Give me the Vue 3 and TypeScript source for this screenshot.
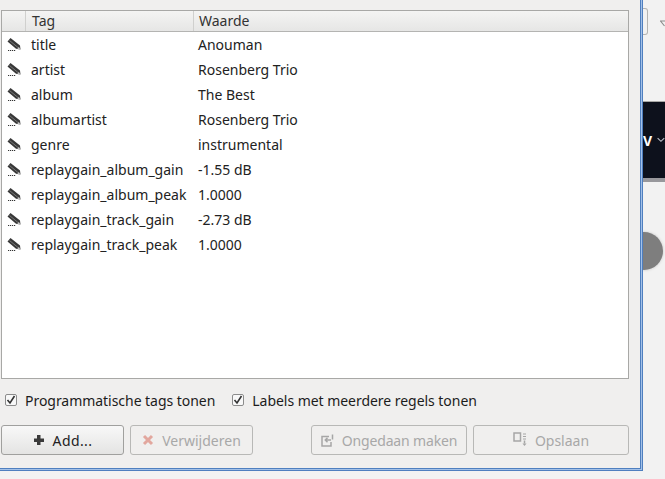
<script setup lang="ts">
interface TagRow {
  tag: string;
  value: string;
}

const rows: TagRow[] = [
  { tag: "title", value: "Anouman" },
  { tag: "artist", value: "Rosenberg Trio" },
  { tag: "album", value: "The Best" },
  { tag: "albumartist", value: "Rosenberg Trio" },
  { tag: "genre", value: "instrumental" },
  { tag: "replaygain_album_gain", value: "-1.55 dB" },
  { tag: "replaygain_album_peak", value: "1.0000" },
  { tag: "replaygain_track_gain", value: "-2.73 dB" },
  { tag: "replaygain_track_peak", value: "1.0000" },
];
</script>

<template>
  <div class="desktop">
    <div class="dialog">
      <div class="table">
        <div class="thead">
          <div class="th th-icon"></div>
          <div class="th th-tag">Tag</div>
          <div class="th th-value">Waarde</div>
        </div>
        <div class="tbody">
          <div v-for="row in rows" :key="row.tag" class="row">
            <svg class="pencil" width="14" height="14" viewBox="0 0 14 14">
              <path d="M0.500 3.500 L3.500 0 L13 7.500 L13.500 11.500 L9 10.800 Z" fill="#383838" />
              <path d="M2.500 2.500 L11 9.500" stroke="#787878" stroke-width="1" />
              <path d="M11.800 8.800 L13.500 11.500 L10.300 11 Z" fill="#c4c4c4" />
              <path d="M1 12.500h1.200M3 12.500h1.200M5 12.500h1.200M7 12.500h1.200" stroke="#333" stroke-width="1" />
            </svg>
            <span class="cell-tag">{{ row.tag }}</span>
            <span class="cell-value">{{ row.value }}</span>
          </div>
        </div>
      </div>

      <div class="options">
        <label class="check">
          <span class="box">
            <svg width="10" height="10" viewBox="0 0 10 10"><path d="M1.500 5 L4 8 L8.500 1" fill="none" stroke="#333" stroke-width="1.600" /></svg>
          </span>
          Programmatische tags tonen
        </label>
        <label class="check">
          <span class="box">
            <svg width="10" height="10" viewBox="0 0 10 10"><path d="M1.500 5 L4 8 L8.500 1" fill="none" stroke="#333" stroke-width="1.600" /></svg>
          </span>
          Labels met meerdere regels tonen
        </label>
      </div>

      <div class="buttons">
        <button class="btn btn-add">
          <svg width="12" height="12" viewBox="0 0 12 12"><path d="M4 1h3.500v3.500H11V8H7.500v3H4V8H1V4.500h3Z" fill="#3a3a3a" /></svg>
          Add...
        </button>
        <button class="btn btn-remove" disabled>
          <svg width="12" height="12" viewBox="0 0 12 12"><path d="M2 2 L10 10 M10 2 L2 10" stroke="#e2a79e" stroke-width="3" /></svg>
          Verwijderen
        </button>
        <span class="spacer"></span>
        <button class="btn btn-undo" disabled>
          <svg width="13" height="13" viewBox="0 0 13 13" fill="none" stroke="#a6a6a6" stroke-width="1.500"><path d="M8 2.500H1v9.500h9V8" /><path d="M10 6H5M6.500 3.800 4.300 6l2.200 2.200" /><path d="M11.500 0.500v5" /></svg>
          Ongedaan maken
        </button>
        <button class="btn btn-save" disabled>
          <svg width="14" height="16" viewBox="0 0 14 16" fill="none" stroke="#a6a6a6"><rect x="1" y="1" width="6.500" height="8" stroke-width="1.500" /><path d="M10 2h3M10 4.500h3M10 7h3" stroke-width="1" /><path d="M11.500 8.500v3" stroke-width="1.500" /><path d="M9.500 11.500h4L11.500 14Z" fill="#a6a6a6" stroke="none" /></svg>
          Opslaan
        </button>
      </div>
    </div>

    <div class="backdrop-btn"></div>
    <svg class="backdrop-arrow" width="5" height="8" viewBox="0 0 5 8"><path d="M0 1H5M0.500 1 L4.500 6" fill="none" stroke="#8c8c8c" stroke-width="1.200" /></svg>
    <div class="backdrop-band">
      <span class="band-letter">V</span>
      <svg width="9" height="6" viewBox="0 0 9 6"><path d="M0.700 0.800 L4.500 4.500 L8.300 0.800" fill="none" stroke="#b8bcc4" stroke-width="1.300" /></svg>
    </div>
    <div class="backdrop-circle"></div>
  </div>
</template>

<style scoped>
.desktop {
  position: relative;
  width: 665px;
  height: 479px;
  overflow: hidden;
  background: #f2f2f2;
  font-family: "Noto Sans", sans-serif;
  font-size: 14px;
  color: #222;
}

.dialog {
  position: absolute;
  left: -3px;
  top: -3px;
  z-index: 1;
  width: 644px;
  height: 472px;
  box-sizing: border-box;
  background: #f0efee;
  border: 1px solid #4f7fbf;
  box-shadow: 0 0 0 1px #a3c1e8, 0 0 0 2px #4f7fbf;
  padding: 12px 11px 0 3px;
  display: flex;
  flex-direction: column;
}

.table {
  height: 369px;
  flex: none;
  box-sizing: border-box;
  border: 1px solid #a8a8a6;
  background: #fff;
  display: flex;
  flex-direction: column;
}

.thead {
  display: flex;
  height: 20px;
  flex: none;
  background: linear-gradient(#f4f4f3, #e6e6e5);
  border-bottom: 1px solid #b4b4b2;
}

.th {
  box-sizing: border-box;
  border-right: 1px solid #d0d0ce;
  padding-left: 6px;
  line-height: 20px;
  color: #333;
}

.th-icon { width: 24px; }
.th-tag { width: 168px; }
.th-value { flex: 1; border-right: none; padding-left: 5px; }

.row {
  display: flex;
  align-items: center;
  height: 25px;
}

.pencil {
  margin-left: 5px;
  flex: none;
}

.cell-tag {
  margin-left: 10px;
  width: 167px;
  flex: none;
}

.options {
  display: flex;
  gap: 17px;
  margin-top: 11px;
  height: 20px;
  align-items: center;
  padding-left: 4px;
  letter-spacing: -0.04px;
}

.check {
  display: flex;
  align-items: center;
  gap: 8px;
  color: #1c1c1c;
}

.box {
  width: 10px;
  height: 10px;
  border: 1px solid #8c8c8c;
  border-radius: 2px;
  background: #f8f8f8;
  display: flex;
}

.buttons {
  display: flex;
  margin-top: 15px;
  gap: 6px;
}

.spacer {
  flex: 1;
}

.btn {
  height: 30px;
  box-sizing: border-box;
  border: 1px solid #a0a09e;
  border-radius: 3px;
  background: linear-gradient(#f8f8f8, #e4e4e3);
  font: inherit;
  color: #222;
  padding: 0;
  display: flex;
  align-items: center;
  justify-content: center;
  gap: 8px;
}

.btn:disabled {
  background: #f0efee;
  border-color: #b8b8b6;
  color: #a8a8a8;
}

.btn-add { width: 123px; letter-spacing: 0.4px; }
.btn-remove { width: 123px; }
.btn-undo { width: 156px; letter-spacing: -0.15px; }
.btn-save { width: 156px; }

.backdrop-btn {
  position: absolute;
  left: 643px;
  top: 8px;
  width: 5px;
  height: 27px;
  box-sizing: border-box;
  border: 1px solid #b4b4b2;
  border-left: none;
  border-radius: 0 3px 3px 0;
}

.backdrop-arrow {
  position: absolute;
  left: 660px;
  top: 20px;
}

.backdrop-band {
  position: absolute;
  left: 643px;
  top: 101px;
  right: 0;
  height: 76px;
  background: #0d111c;
  border-top: 1px solid #a8a8a6;
  border-bottom: 4px solid #98989c;
  display: flex;
  align-items: center;
  gap: 5px;
}

.band-letter {
  color: #fff;
  font-weight: 700;
  font-size: 14px;
}

.backdrop-circle {
  position: absolute;
  left: 625px;
  top: 232px;
  width: 38px;
  height: 38px;
  border-radius: 50%;
  background: #7e7e7e;
  box-shadow: 0 0 2px 1px #ddd;
}
</style>
